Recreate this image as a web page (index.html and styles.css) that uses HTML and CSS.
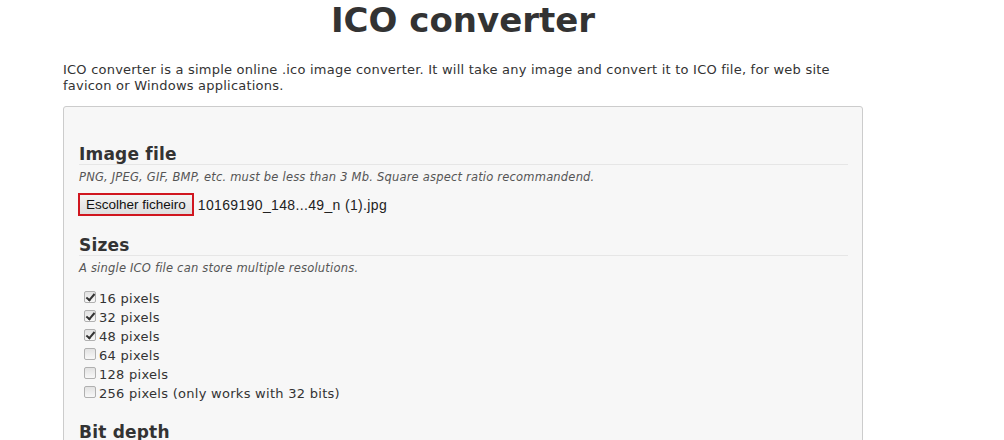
FILE: index.html
```html
<!DOCTYPE html>
<html>
<head>
<meta charset="utf-8">
<link rel="stylesheet" href="styles.css">
</head>
<body>
<div class="page">
  <h1 class="title">ICO converter</h1>
  <p class="intro">ICO converter is a simple online .ico image converter. It will take any image and convert it to ICO file, for web site favicon or Windows applications.</p>
  <form class="panel">
    <section class="group">
      <h2 class="group-title">Image file</h2>
      <p class="hint">PNG, JPEG, GIF, BMP, etc. must be less than 3 Mb. Square aspect ratio recommandend.</p>
      <div class="file-row">
        <button type="button" class="file-btn">Escolher ficheiro</button>
        <span class="file-name">10169190_148...49_n (1).jpg</span>
      </div>
    </section>
    <section class="group">
      <h2 class="group-title">Sizes</h2>
      <p class="hint">A single ICO file can store multiple resolutions.</p>
      <ul class="checks">
        <li><label><input type="checkbox" checked> 16 pixels</label></li>
        <li><label><input type="checkbox" checked> 32 pixels</label></li>
        <li><label><input type="checkbox" checked> 48 pixels</label></li>
        <li><label><input type="checkbox"> 64 pixels</label></li>
        <li><label><input type="checkbox"> 128 pixels</label></li>
        <li><label><input type="checkbox"> 256 pixels (only works with 32 bits)</label></li>
      </ul>
    </section>
    <section class="group">
      <h2 class="group-title">Bit depth</h2>
    </section>
  </form>
</div>
</body>
</html>
```

FILE: styles.css
```css
html, body {
  margin: 0;
  padding: 0;
  background: #ffffff;
}
body {
  font-family: "DejaVu Sans", Verdana, sans-serif;
  color: #333333;
  overflow: hidden;
}
.page {
  width: 800px;
  margin-left: 63px;
}
.title {
  margin: 0;
  text-align: center;
  font-size: 34px;
  line-height: 40px;
  font-weight: bold;
  color: #333333;
}
.intro {
  margin: 22px 0 0 0;
  font-size: 13px;
  line-height: 16px;
  letter-spacing: 0.22px;
  color: #333333;
}
.panel {
  margin-top: 12px;
  background: #f7f7f7;
  border: 1px solid #cccccc;
  border-radius: 3px;
  padding: 37px 14px 40px 15px;
}
.group {
  margin-bottom: 19px;
}
.group-title {
  margin: 0;
  font-size: 17px;
  line-height: 20px;
  font-weight: bold;
  letter-spacing: 0.2px;
  color: #333333;
  border-bottom: 1px solid #e6e6e6;
  padding-bottom: 0;
}
.hint {
  margin: 5px 0 0 0;
  font-size: 11.5px;
  line-height: 14px;
  letter-spacing: 0.2px;
  font-style: italic;
  color: #555555;
}
.file-row {
  display: flex;
  align-items: center;
  margin-top: 9px;
  margin-left: -1px;
}
.file-btn {
  font-family: "Liberation Sans", Arial, sans-serif;
  font-size: 13.5px;
  color: #111111;
  background: linear-gradient(#f3f3f3, #dedede);
  border: 2px solid #d0161f;
  padding: 0 6px;
  height: 23px;
  line-height: 19px;
  margin: 0;
}
.file-name {
  font-family: "Liberation Sans", Arial, sans-serif;
  font-size: 14px;
  letter-spacing: 0.35px;
  color: #222222;
  margin-left: 4px;
}
.checks {
  list-style: none;
  margin: 14px 0 0 0;
  padding: 0;
}
.checks li {
  height: 19px;
  font-size: 13px;
  line-height: 19px;
  letter-spacing: 0.28px;
  color: #333333;
}
.checks label {
  display: flex;
  align-items: center;
  gap: 3px;
}
.checks input {
  appearance: none;
  -webkit-appearance: none;
  width: 12px;
  height: 12px;
  margin: 0 0 4px 5px;
  border: 1px solid #b0b0b0;
  border-radius: 2px;
  background: linear-gradient(#e2e2e2, #f8f8f8);
  position: relative;
  flex: none;
}
.checks input:checked::after {
  content: "";
  position: absolute;
  left: 3px;
  top: 0px;
  width: 3px;
  height: 7px;
  border: solid #333333;
  border-width: 0 2px 2px 0;
  transform: rotate(40deg);
}
```
